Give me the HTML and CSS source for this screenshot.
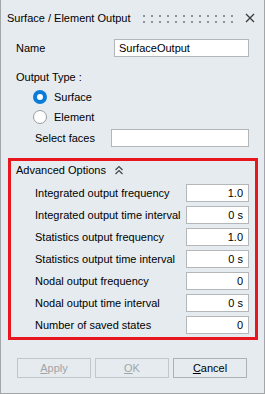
FILE: index.html
```html
<!DOCTYPE html>
<html lang="en">
<head>
    <meta charset="UTF-8">
    <title>Surface / Element Output</title>
    <link rel="stylesheet" href="styles.css">
</head>
<body>
    <div class="window">
        <!-- Title bar -->
        <div class="titlebar">
            <span class="title">Surface / Element Output</span>
            <svg class="grip" width="90" height="8" viewBox="0 0 90 8">
                <defs>
                    <pattern id="grip-dots" width="8" height="6" patternUnits="userSpaceOnUse">
                        <rect width="2" height="2" fill="#8f9396"/>
                    </pattern>
                </defs>
                <rect width="90" height="8" fill="url(#grip-dots)"/>
            </svg>
            <svg class="close" width="10" height="10" viewBox="0 0 10 10">
                <path d="M1 1 L9 9 M9 1 L1 9" stroke="#3c3c3c" stroke-width="1.3" fill="none"/>
            </svg>
        </div>

        <div class="field name-row">
            <label>Name</label>
            <input class="text-input name-input" type="text" value="SurfaceOutput">
        </div>

        <div class="field type-label">Output Type :</div>

        <div class="field radio-row">
            <span class="radio checked"></span>
            <span>Surface</span>
        </div>
        <div class="field radio-row">
            <span class="radio"></span>
            <span>Element</span>
        </div>

        <div class="field faces-row">
            <label>Select faces</label>
            <input class="text-input faces-input" type="text">
        </div>

        <!-- Advanced options -->
        <div class="advanced">
            <div class="advanced-head">
                <span>Advanced Options</span>
                <svg class="collapse" width="10" height="10" viewBox="0 0 10 10">
                    <path d="M1.5 5 L5 1.5 L8.5 5 M1.5 9 L5 5.5 L8.5 9" stroke="#404448" stroke-width="1.2" fill="none"/>
                </svg>
            </div>
            <div class="option-row">
                <label>Integrated output frequency</label>
                <input class="text-input num-input" type="text" value="1.0">
            </div>
            <div class="option-row">
                <label>Integrated output time interval</label>
                <input class="text-input num-input" type="text" value="0 s">
            </div>
            <div class="option-row">
                <label>Statistics output frequency</label>
                <input class="text-input num-input" type="text" value="1.0">
            </div>
            <div class="option-row">
                <label>Statistics output time interval</label>
                <input class="text-input num-input" type="text" value="0 s">
            </div>
            <div class="option-row">
                <label>Nodal output frequency</label>
                <input class="text-input num-input" type="text" value="0">
            </div>
            <div class="option-row">
                <label>Nodal output time interval</label>
                <input class="text-input num-input" type="text" value="0 s">
            </div>
            <div class="option-row">
                <label>Number of saved states</label>
                <input class="text-input num-input" type="text" value="0">
            </div>
        </div>

        <div class="buttons">
            <button class="btn" disabled><u>A</u>pply</button>
            <button class="btn" disabled><u>O</u>K</button>
            <button class="btn"><u>C</u>ancel</button>
        </div>
    </div>
</body>
</html>
```

FILE: styles.css
```css
/* General Styles */
body {
    margin: 0;
    padding: 0;
    font-family: 'Liberation Sans', Arial, sans-serif;
    font-size: 11px;
    color: #000000;
    background: #e5ebef;
}

.window {
    box-sizing: border-box;
    width: 265px;
    height: 394px;
    background: #e5ebef;
    border: 1px solid #a3a6a8;
    border-top: none;
}

/* Title bar */
.titlebar {
    display: flex;
    align-items: center;
    height: 36px;
    padding: 0 9px 0 6px;
}

.title {
    font-size: 11px;
}

.grip {
    margin-left: auto;
    margin-right: 12px;
    margin-top: 2px;
}

/* Form rows */
.field {
    display: flex;
    align-items: center;
    height: 18px;
    padding: 0 15px;
}

.text-input {
    box-sizing: border-box;
    height: 18px;
    margin: 0;
    padding: 0 4px;
    border: 1px solid #b4b7ba;
    background: #ffffff;
    font-family: inherit;
    font-size: 11px;
    color: #000000;
    outline: none;
}

.name-row {
    margin-top: 3px;
}

.name-input {
    width: 135px;
    margin-left: auto;
}

.type-label {
    margin-top: 11px;
}

.radio-row {
    margin-top: 2px;
    padding-left: 32px;
    gap: 7px;
}

.radio {
    box-sizing: border-box;
    width: 14px;
    height: 14px;
    border-radius: 50%;
    border: 1px solid #9a9da0;
    background: #ffffff;
}

.radio.checked {
    border: 4.5px solid #0a7bd8;
    background: #ffffff;
}

.faces-row {
    margin-top: 3px;
    padding-left: 34px;
}

.faces-input {
    width: 138px;
    margin-left: auto;
}

/* Advanced section */
.advanced {
    box-sizing: border-box;
    width: 250px;
    margin: 11px 0 0 7px;
    padding: 0 6px 3px 0;
    border: 3px solid #e8161f;
}

.advanced-head {
    display: flex;
    align-items: center;
    height: 18px;
    padding-left: 5px;
    gap: 8px;
}

.option-row {
    display: flex;
    align-items: center;
    height: 18px;
    margin-top: 4px;
    padding-left: 24px;
}

.advanced-head + .option-row {
    margin-top: 5px;
}

.num-input {
    width: 63px;
    margin-left: auto;
    text-align: right;
    padding-right: 5px;
}

/* Buttons */
.buttons {
    display: flex;
    gap: 4px;
    margin-top: 18px;
    padding-left: 16px;
}

.btn {
    box-sizing: border-box;
    width: 74px;
    height: 20px;
    padding: 0;
    border: 1px solid #adb1b4;
    background: #e5ebef;
    font-family: inherit;
    font-size: 11px;
    color: #000000;
}

.btn:disabled {
    color: #a2a5a8;
    border-color: #c3c7ca;
}
```
